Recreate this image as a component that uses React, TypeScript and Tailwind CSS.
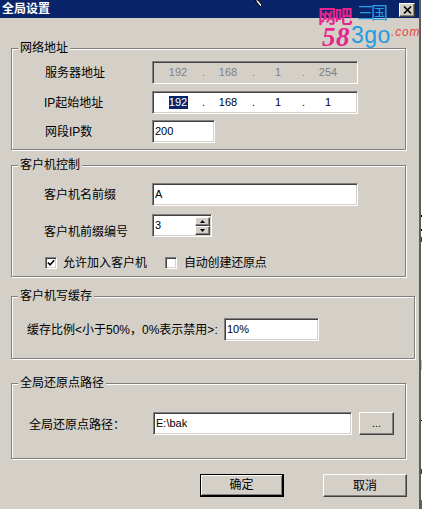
import { ReactNode } from "react";

const sunken =
  "border border-t-[#808080] border-l-[#808080] border-r-white border-b-white shadow-[inset_1px_1px_0_#404040,inset_-1px_-1px_0_#d4d0c8]";
const raised =
  "border border-t-white border-l-white border-r-[#404040] border-b-[#404040] shadow-[inset_-1px_-1px_0_#808080]";

function Group({ title, className, children }: { title: string; className: string; children: ReactNode }) {
  return (
    <div
      className={`relative ml-[11px] border border-[#808080] shadow-[1px_1px_0_#fff,inset_1px_1px_0_#fff] ${className}`}
    >
      <span className="absolute -top-[8px] left-[6px] bg-[#d4d0c8] px-[2px] text-[12px] leading-[14px] text-black">
        {title}
      </span>
      {children}
    </div>
  );
}

function IpField({ parts, disabled, selected }: { parts: string[]; disabled?: boolean; selected?: boolean }) {
  return (
    <div
      className={`flex h-[23px] w-[206px] items-center pl-[2px] text-[11px] ${sunken} ${
        disabled ? "bg-[#d4d0c8] text-[#808080]" : "bg-white text-black"
      }`}
    >
      {parts.map((part, i) => (
        <div key={i} className="flex items-center">
          <div className="flex w-[46px] justify-center">
            {selected && i === 0 ? (
              <span className="flex h-[13px] w-[19px] items-center justify-center bg-[#0a246a] text-white">{part}</span>
            ) : (
              part
            )}
          </div>
          {i < 3 && <div className="w-[4px] text-right">.</div>}
        </div>
      ))}
    </div>
  );
}

function TextField({ value, className }: { value: string; className: string }) {
  return (
    <div className={`flex items-center bg-white pl-[2px] text-[11px] text-black ${sunken} ${className}`}>{value}</div>
  );
}

function CheckBox({ checked }: { checked?: boolean }) {
  return (
    <div className={`flex h-[12px] w-[12px] items-center justify-center bg-white ${sunken}`}>
      {checked && (
        <svg width="8" height="8" viewBox="0 0 9 9">
          <path d="M1 4l2.500 2.500L8 1.500" fill="none" stroke="#000" strokeWidth="1.800" />
        </svg>
      )}
    </div>
  );
}

function SpinButton({ down }: { down?: boolean }) {
  return (
    <div className={`flex h-[9px] w-[15px] items-center justify-center bg-[#d4d0c8] ${raised}`}>
      <svg width="5" height="3" viewBox="0 0 5 3">
        <path d={down ? "M0 0h5L2.500 3z" : "M0 3h5L2.500 0z"} fill="#000" />
      </svg>
    </div>
  );
}

function Logo() {
  return (
    <div className="absolute left-[318px] top-[4px] h-[44px] w-[100px] select-none">
      <span className="absolute left-0 top-[4px] text-[18px] font-bold leading-[18px] tracking-[-1.500px] text-[#e6248e]">
        网吧
      </span>
      <span className="absolute left-[39px] top-[1px] text-[17px] leading-[18px] tracking-[-3px] text-[#2b9fe0]">三国</span>
      <span className="absolute left-[4px] top-[23px] font-['Liberation_Serif',serif] text-[27px] font-bold italic leading-[20px] tracking-[0.500px] text-[#e6248e]">
        58
      </span>
      <span className="absolute left-[33px] top-[20px] font-['Liberation_Sans',sans-serif] text-[23px] leading-[23px] tracking-[0.500px] text-[#1f9ce0]">
        3go
      </span>
      <span className="absolute left-[73px] top-[22px] font-['Liberation_Sans',sans-serif] text-[12px] italic leading-[13px] tracking-[0.800px] text-[#e8413c]">
        .com
      </span>
    </div>
  );
}

export default function App() {
  return (
    <div className="relative flex h-[509px] w-[422px] overflow-hidden bg-white font-['Liberation_Sans','Noto_Sans_CJK_SC',sans-serif] text-[12px] text-black">
      <div className="flex w-[419px] flex-col bg-[#d4d0c8]">
        {/* title bar */}
        <div className="flex h-[18px] items-center justify-between bg-[#0a246a] pl-[2px] pr-[4px]">
          <span className="text-[12px] font-bold leading-none text-white">全局设置</span>
          <div className={`mt-[1px] flex h-[14px] w-[16px] items-center justify-center bg-[#d4d0c8] ${raised}`}>
            <svg width="9" height="8" viewBox="0 0 9 8">
              <path d="M1 0.500l7 7M8 0.500l-7 7" stroke="#000" strokeWidth="1.600" fill="none" />
            </svg>
          </div>
        </div>

        <Group title="网络地址" className="mt-[30px] h-[102px] w-[395px] pl-[33px] pt-[12px]">
          <div className="flex h-[23px] items-center">
            <span className="w-[107px]">服务器地址</span>
            <IpField parts={["192", "168", "1", "254"]} disabled />
          </div>
          <div className="mt-[7px] flex h-[23px] items-center">
            <span className="-ml-[1px] w-[108px]">IP起始地址</span>
            <IpField parts={["192", "168", "1", "1"]} selected />
          </div>
          <div className="mt-[6px] flex h-[23px] items-center">
            <span className="w-[107px]">网段IP数</span>
            <TextField value="200" className="h-[23px] w-[63px]" />
          </div>
        </Group>

        <Group title="客户机控制" className="mt-[15px] h-[112px] w-[395px] pl-[32px] pt-[17px]">
          <div className="flex h-[23px] items-center">
            <span className="w-[108px]">客户机名前缀</span>
            <TextField value="A" className="h-[23px] w-[206px]" />
          </div>
          <div className="mt-[8px] flex h-[23px] items-start">
            <span className="mt-[9px] w-[108px]">客户机前缀编号</span>
            <div className={`flex h-[23px] w-[60px] items-center justify-between bg-white pl-[2px] pr-[1px] text-[11px] ${sunken}`}>
              3
              <div className="flex flex-col">
                <SpinButton />
                <SpinButton down />
              </div>
            </div>
          </div>
          <div className="mt-[19px] flex h-[13px] items-center pl-[1px]">
            <CheckBox checked />
            <span className="ml-[6px] w-[102px]">允许加入客户机</span>
            <CheckBox />
            <span className="ml-[7px] tracking-[-0.200px]">自动创建还原点</span>
          </div>
        </Group>

        <Group title="客户机写缓存" className="mt-[19px] flex h-[63px] w-[404px] items-start pl-[15px] pt-[21px]">
          <span className="mt-[3px] w-[197px] whitespace-nowrap">缓存比例&lt;小于50%，0%表示禁用&gt;:</span>
          <TextField value="10%" className="h-[23px] w-[95px]" />
        </Group>

        <Group title="全局还原点路径" className="mt-[24px] flex h-[76px] w-[395px] items-start pl-[17px] pt-[28px]">
          <span className="mt-[4px] w-[124px] whitespace-nowrap">全局还原点路径：</span>
          <TextField value="E:\bak" className="h-[23px] w-[199px]" />
          <div className={`ml-[7px] flex h-[23px] w-[35px] items-center justify-center bg-[#d4d0c8] text-[11px] ${raised}`}>
            ...
          </div>
        </Group>

        <div className="ml-[200px] mt-[15px] flex">
          <div className="flex h-[23px] w-[84px] items-center justify-center border border-black border-b-2 border-r-2 bg-[#d4d0c8] shadow-[inset_1px_1px_0_#fff,inset_-1px_-1px_0_#808080]">
            确定
          </div>
          <div className={`ml-[39px] flex h-[23px] w-[84px] items-center justify-center bg-[#d4d0c8] ${raised}`}>
            取消
          </div>
        </div>
      </div>

      {/* edge of the window behind */}
      <div className="w-[2px] bg-[#5c5c5c]" />
      <div className="flex w-[1px] flex-col bg-white">
        <div className="mt-[215px] h-[2px] bg-black" />
        <div className="mt-[12px] h-[2px] bg-black" />
        <div className="mt-[6px] h-[5px] bg-[#404040]" />
        <div className="mt-[118px] h-[10px] bg-[#c0c0c0]" />
        <div className="mt-[50px] h-[1px] bg-black" />
        <div className="mt-[48px] h-[5px] bg-[#404040]" />
        <div className="mt-auto h-[9px] bg-[#2b6cc4]" />
      </div>

      <Logo />

      {/* mouse pointer, cut off by the top edge */}
      <svg className="absolute left-[254px] top-0" width="12" height="7" viewBox="0 0 12 7">
        <path d="M1 0l3 0 4 5 -1.500 1.500 -1.500 -1.500z" fill="#fff" stroke="#000" strokeWidth="1" />
      </svg>
    </div>
  );
}
